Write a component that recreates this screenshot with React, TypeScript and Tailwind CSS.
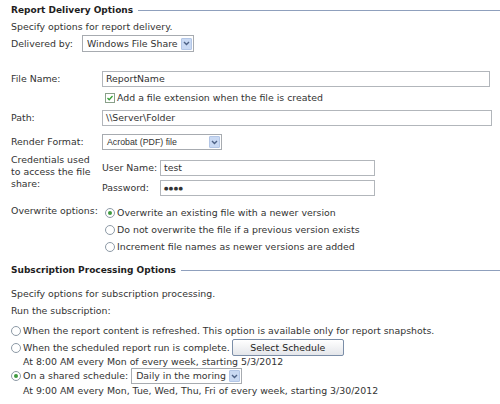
import React from 'react';

const font = { fontFamily: '"DejaVu Sans", Verdana, sans-serif' };

const Heading = ({ title }: { title: string }) => (
  <div className="flex items-center h-[13px]">
    <span className="font-bold text-[9px] text-[#1e1e1e] whitespace-nowrap pr-[5px]">{title}</span>
    <div className="flex-1 h-px bg-[#8fa0bd]" />
  </div>
);

const Arrow = () => (
  <div className="w-[11px] h-[12px] mr-[1px] rounded-[1px] bg-[#c9d9f3] border border-[#b3c6e6] flex items-center justify-center shrink-0">
    <svg width="7" height="5" viewBox="0 0 7 5">
      <path d="M1 1 L3.5 3.5 L6 1" fill="none" stroke="#4d6185" strokeWidth="1.4" />
    </svg>
  </div>
);

const Select = ({ value, w, arial }: { value: string; w?: string; arial?: boolean }) => (
  <div className={`flex items-center justify-between gap-[3px] h-[17px] border border-[#a7abb0] bg-white ${w ?? ''}`}>
    <span
      className={`pl-[4px] whitespace-nowrap ${arial ? 'text-[8.8px]' : ''}`}
      style={arial ? { fontFamily: '"Liberation Sans", Arial, sans-serif' } : undefined}
    >
      {value}
    </span>
    <Arrow />
  </div>
);

const Input = ({ value, w }: { value?: string; w: string }) => (
  <div className={`flex items-center h-[16px] border border-[#b2b6bb] bg-white pl-[3px] ${w}`}>
    {value}
  </div>
);

const Radio = ({ checked }: { checked?: boolean }) => (
  <div className="w-[10px] h-[10px] rounded-full border border-[#8d9aa6] bg-white flex items-center justify-center mr-[2px] shrink-0">
    {checked && <div className="w-[4px] h-[4px] rounded-full bg-[#3f9a3f]" />}
  </div>
);

const App = () => {
  return (
    <div className="w-[500px] h-[404px] bg-white text-[#333] text-[9.4px] leading-none pt-[4px] pl-[11px] overflow-hidden" style={font}>
      <Heading title="Report Delivery Options" />
      <div className="h-[14px] mt-[3px] flex items-center">Specify options for report delivery.</div>
      <div className="h-[17px] mt-[1px] flex items-center">
        <span className="w-[71px]">Delivered by:</span>
        <Select value="Windows File Share" />
      </div>

      <div className="h-[16px] mt-[19px] flex items-center">
        <span className="w-[91px]">File Name:</span>
        <Input value="ReportName" w="w-[388px]" />
      </div>
      <div className="h-[14px] mt-[4px] flex items-center pl-[94px]">
        <div className="w-[10px] h-[10px] border border-[#8aa08a] bg-white flex items-center justify-center mr-[2px]">
          <svg width="8" height="8" viewBox="0 0 8 8">
            <path d="M1.5 4 L3.2 5.8 L6.5 2" fill="none" stroke="#35a035" strokeWidth="1.3" />
          </svg>
        </div>
        <span>Add a file extension when the file is created</span>
      </div>
      <div className="h-[16px] mt-[5px] flex items-center">
        <span className="w-[91px]">Path:</span>
        <Input value="\\Server\Folder" w="w-[390px]" />
      </div>
      <div className="h-[16px] mt-[8px] flex items-center">
        <span className="w-[91px]">Render Format:</span>
        <Select value="Acrobat (PDF) file" w="w-[120px] !h-[16px]" arial />
      </div>

      <div className="mt-[4px] flex">
        <div className="w-[91px] leading-[12px]">
          Credentials used<br />to access the file<br />share:
        </div>
        <div className="pt-[6px] flex flex-col gap-[4px]">
          <div className="h-[16px] flex items-center">
            <span className="w-[58px]">User Name:</span>
            <Input value="test" w="w-[215px]" />
          </div>
          <div className="h-[16px] flex items-center">
            <span className="w-[58px]">Password:</span>
            <Input value="●●●●" w="w-[215px] text-[5px] tracking-[0.5px]" />
          </div>
        </div>
      </div>

      <div className="mt-[8px] flex">
        <div className="w-[91px] pt-[2px]">Overwrite options:</div>
        <div className="flex flex-col pl-[3px]">
          {[
            ['Overwrite an existing file with a newer version', true],
            ['Do not overwrite the file if a previous version exists', false],
            ['Increment file names as newer versions are added', false],
          ].map(([t, c]) => (
            <div key={t as string} className="h-[17px] flex items-center">
              <Radio checked={c as boolean} />
              <span>{t}</span>
            </div>
          ))}
        </div>
      </div>

      <div className="mt-[9px]">
        <Heading title="Subscription Processing Options" />
      </div>
      <div className="h-[14px] mt-[10px] flex items-center">Specify options for subscription processing.</div>
      <div className="h-[14px] mt-[3px] flex items-center">Run the subscription:</div>

      <div className="h-[14px] mt-[6px] flex items-center">
        <Radio />
        <span className="whitespace-nowrap">When the report content is refreshed. This option is available only for report snapshots.</span>
      </div>
      <div className="h-[17px] mt-[1px] flex items-center">
        <Radio />
        <span className="pr-[2px] whitespace-nowrap">When the scheduled report run is complete.</span>
        <button className="w-[112px] h-[17px] shrink-0 border border-[#7b8ea8] rounded-[2px] bg-gradient-to-b from-[#ffffff] to-[#e4e6ea] text-[#222] leading-none">
          Select Schedule
        </button>
      </div>
      <div className="h-[12px] pl-[12px] flex items-center">At 8:00 AM every Mon of every week, starting 5/3/2012</div>
      <div className="h-[16px] flex items-center">
        <Radio checked />
        <span className="pr-[3px]">On a shared schedule:</span>
        <Select value="Daily in the moring" w="!h-[16px]" />
      </div>
      <div className="h-[12px] mt-[1px] pl-[12px] flex items-center whitespace-nowrap">
        At 9:00 AM every Mon, Tue, Wed, Thu, Fri of every week, starting 3/30/2012
      </div>
    </div>
  );
};

export default App;
